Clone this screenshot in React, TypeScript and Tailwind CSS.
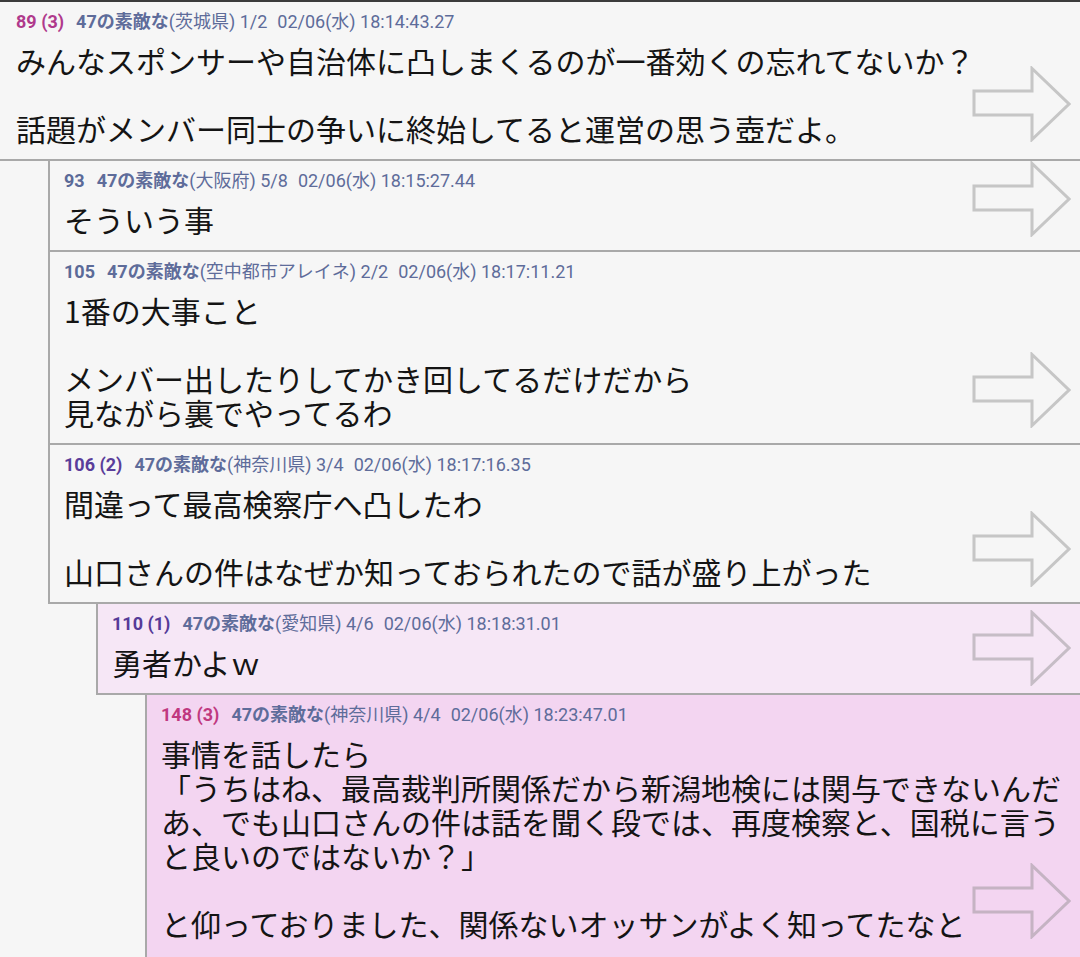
import React from "react";

type Post = {
  no: string;
  noColor: string;
  pref: string;
  count: string;
  time: string;
  indent: string;
  bg: string;
  lines: string[];
  arrowTop: string;
  first?: boolean;
  last?: boolean;
};

const posts: Post[] = [
  {
    no: "89 (3)",
    noColor: "text-[#b03a8c]",
    pref: "(茨城県)",
    count: "1/2",
    time: "02/06(水) 18:14:43.27",
    indent: "ml-0",
    bg: "bg-[#f6f6f6]",
    lines: [
      "みんなスポンサーや自治体に凸しまくるのが一番効くの忘れてないか？",
      "",
      "話題がメンバー同士の争いに終始してると運営の思う壺だよ。",
    ],
    arrowTop: "top-[64px]",
    first: true,
  },
  {
    no: "93",
    noColor: "text-[#5b6a98]",
    pref: "(大阪府)",
    count: "5/8",
    time: "02/06(水) 18:15:27.44",
    indent: "ml-[48px]",
    bg: "bg-[#f6f6f6]",
    lines: ["そういう事"],
    arrowTop: "top-0",
  },
  {
    no: "105",
    noColor: "text-[#5b6a98]",
    pref: "(空中都市アレイネ)",
    count: "2/2",
    time: "02/06(水) 18:17:11.21",
    indent: "ml-[48px]",
    bg: "bg-[#f6f6f6]",
    lines: [
      "1番の大事こと",
      "",
      "メンバー出したりしてかき回してるだけだから",
      "見ながら裏でやってるわ",
    ],
    arrowTop: "top-[100px]",
  },
  {
    no: "106 (2)",
    noColor: "text-[#5a3d9a]",
    pref: "(神奈川県)",
    count: "3/4",
    time: "02/06(水) 18:17:16.35",
    indent: "ml-[48px]",
    bg: "bg-[#f6f6f6]",
    lines: [
      "間違って最高検察庁へ凸したわ",
      "",
      "山口さんの件はなぜか知っておられたので話が盛り上がった",
    ],
    arrowTop: "top-[66px]",
  },
  {
    no: "110 (1)",
    noColor: "text-[#553a98]",
    pref: "(愛知県)",
    count: "4/6",
    time: "02/06(水) 18:18:31.01",
    indent: "ml-[96px]",
    bg: "bg-[#f6e7f6]",
    lines: ["勇者かよｗ"],
    arrowTop: "top-[6px]",
  },
  {
    no: "148 (3)",
    noColor: "text-[#c0387f]",
    pref: "(神奈川県)",
    count: "4/4",
    time: "02/06(水) 18:23:47.01",
    indent: "ml-[145px]",
    bg: "bg-[#f3d5f1]",
    lines: [
      "事情を話したら",
      "「うちはね、最高裁判所関係だから新潟地検には関与できないんだ",
      "あ、でも山口さんの件は話を聞く段では、再度検察と、国税に言う",
      "と良いのではないか？」",
      "",
      "と仰っておりました、関係ないオッサンがよく知ってたなと",
    ],
    arrowTop: "top-[168px]",
    last: true,
  },
];

function Arrow({ top }: { top: string }) {
  return (
    <svg
      className={`absolute right-[9px] ${top}`}
      width="100"
      height="76"
      viewBox="0 0 100 76"
      fill="none"
    >
      <path
        d="M3 25 H61 V2.5 L98 38 L61 73.5 V49 H3 Z"
        stroke="#808080"
        strokeOpacity="0.4"
        strokeWidth="3"
      />
    </svg>
  );
}

function PostRow({ p }: { p: Post }) {
  return (
    <div
      className={`relative ${p.indent} ${p.bg} border-b-2 border-[#a9a9a9] ${
        p.first ? "pl-4" : "border-l-2 pl-[14px]"
      } ${p.last ? "pb-[40px]" : "pb-[14px]"} pr-2 pt-[7px]`}
    >
      <div className="text-[18px] leading-[26px] whitespace-nowrap font-['Roboto','Noto_Sans_CJK_JP',sans-serif] text-[#5e6c9a]">
        <span className={`font-bold ${p.noColor}`}>{p.no}</span>
        <span className="font-bold ml-[12px]">47の素敵な</span>
        <span>{p.pref} </span>
        <span>{p.count}</span>
        <span className="ml-[10px]">{p.time}</span>
      </div>
      <div className="mt-[8px] text-[30px] leading-[34px] text-[#141414] whitespace-nowrap font-['Noto_Sans_CJK_JP',sans-serif]">
        {p.lines.map((l, i) => (
          <div key={i}>{l || "\u00a0"}</div>
        ))}
      </div>
      <Arrow top={p.arrowTop} />
    </div>
  );
}

export default function App() {
  return (
    <div className="w-[1080px] h-[957px] overflow-hidden bg-[#f6f6f6] border-t-2 border-[#3c3c3c]">
      {posts.map((p) => (
        <PostRow key={p.no} p={p} />
      ))}
    </div>
  );
}
